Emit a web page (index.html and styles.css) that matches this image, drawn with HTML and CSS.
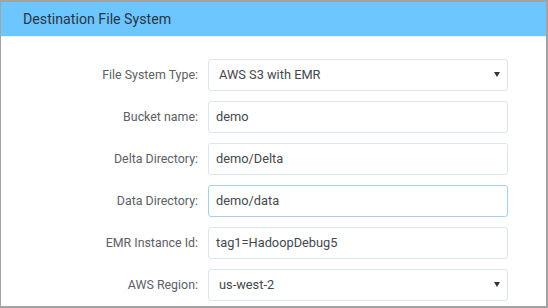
FILE: index.html
```html
<!DOCTYPE html>
<html>
<head>
<meta charset="utf-8">
<link rel="stylesheet" href="styles.css">
</head>
<body>
<div class="frame">
  <div class="header">Destination File System</div>
  <form class="form">
    <label class="label">File System Type:</label>
    <div class="select-wrap">
      <div class="field select">AWS S3 with EMR</div>
      <span class="arrow"></span>
    </div>
    <label class="label">Bucket name:</label>
    <div class="field">demo</div>
    <label class="label">Delta Directory:</label>
    <div class="field">demo/Delta</div>
    <label class="label">Data Directory:</label>
    <div class="field focus">demo/data</div>
    <label class="label">EMR Instance Id:</label>
    <div class="field">tag1=HadoopDebug5</div>
    <label class="label">AWS Region:</label>
    <div class="select-wrap">
      <div class="field select">us-west-2</div>
      <span class="arrow"></span>
    </div>
  </form>
</div>
</body>
</html>
```
FILE: styles.css
```css
html, body {
  margin: 0;
  padding: 0;
  background: #ffffff;
}
.frame {
  box-sizing: border-box;
  width: 548px;
  height: 308px;
  border-style: solid;
  border-color: #a3a3a3;
  border-width: 2px 2px 2px 1px;
  overflow: hidden;
  font-family: Roboto, "Liberation Sans", sans-serif;
}
.header {
  height: 34px;
  line-height: 34px;
  background: #6ec6ff;
  border-bottom: 1px solid #dff3ff;
  padding-left: 22px;
  font-size: 14.2px;
  color: #283646;
}
.form {
  display: grid;
  grid-template-columns: 197px 300px;
  column-gap: 10px;
  row-gap: 10px;
  padding-top: 22px;
  margin: 0;
}
.label {
  font-size: 12.4px;
  color: #5c6066;
  text-align: right;
  line-height: 32px;
  height: 32px;
}
.field {
  box-sizing: border-box;
  height: 32px;
  line-height: 30px;
  border: 1px solid #dde5ee;
  border-radius: 3px;
  padding-left: 7px;
  font-size: 12.8px;
  color: #44484d;
  background: #fff;
}
.field.select {
  padding-left: 10px;
}
.field.focus {
  border-color: #a6cff0;
}
.select-wrap {
  position: relative;
}
.arrow {
  position: absolute;
  right: 8px;
  top: 13px;
  width: 0;
  height: 0;
  border-left: 3px solid transparent;
  border-right: 3px solid transparent;
  border-top: 5px solid #333;
}
```
